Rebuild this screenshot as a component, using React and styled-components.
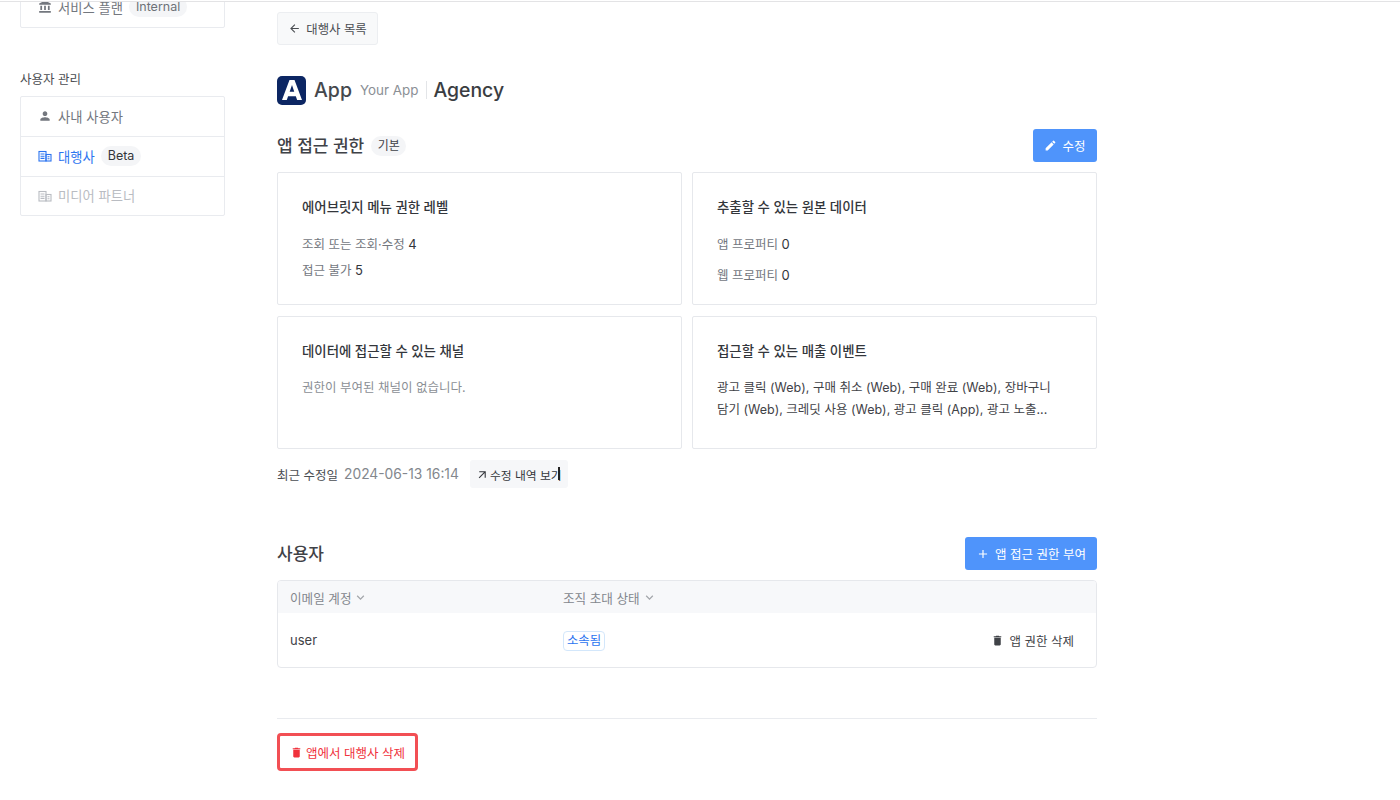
import React from "react";
import styled, { createGlobalStyle } from "styled-components";
import { MdPerson, MdAccountBalance, MdEdit, MdDelete, MdArrowBack, MdAdd, MdArrowOutward, MdKeyboardArrowDown } from "react-icons/md";

const Global = createGlobalStyle`
  html, body { margin: 0; padding: 0; background: #fff; height: 100%; overflow: hidden; }
  body { font-family: Inter, "Noto Sans CJK KR", "Noto Sans", sans-serif; color: #33363b; -webkit-font-smoothing: antialiased; }
  * { box-sizing: border-box; }
`;

const Page = styled.div`
  width: 1400px; height: 800px; overflow: hidden; display: flex; align-items: flex-start;
  margin-top: 1px; border-top: 1px solid #e3e3e5; padding-left: 20px;
`;
const Sidebar = styled.aside`width: 205px; flex: none; display: flex; flex-direction: column;`;
const SideList = styled.div`
  border: 1px solid #e9ebef; border-radius: 2px; display: flex; flex-direction: column;
  margin-top: ${p => p.$top || 0}px;
`;
const SideRow = styled.div`
  height: 40px; display: flex; align-items: center; gap: 6px; padding: 0 0 1px 17px; font-size: 13.3px;
  color: ${p => p.$active ? "#2b74f0" : p.$disabled ? "#b9bcc2" : "#73777e"};
  & + & { border-top: 1px solid #e9ebef; }
  &:first-child, &:last-child { height: 39px; }
  svg { flex: none; }
`;
const SideBadge = styled.span`
  background: #f4f5f7; border-radius: 10px; padding: 0 7px; height: 20px; line-height: 20px; font-size: 12.5px; margin-left: 0;
  color: ${p => p.$muted ? "#6e7278" : "#33363b"};
`;
const SideLabel = styled.div`font-size: 12.5px; color: #4a4d52; margin: 44px 0 8px; line-height: 16px;`;

const Main = styled.main`width: 820px; margin-left: 52px; flex: none; display: flex; flex-direction: column; align-items: stretch; padding-top: 10px;`;
const BackBtn = styled.div`
  align-self: flex-start; width: 101px; height: 33px; display: flex; align-items: center; justify-content: center; gap: 5px;
  background: #f8f9fa; border: 1px solid #eceef1; border-radius: 3px; font-size: 12.4px; color: #4a4d52;
`;
const TitleRow = styled.div`display: flex; align-items: center; height: 30px; margin-top: 30px;`;
const LogoBox = styled.div`
  width: 29px; height: 29px; border-radius: 5px; background: #0c2663; display: flex; align-items: center; justify-content: center; flex: none;
`;
const AppName = styled.span`font-size: 19.5px; font-weight: 500; color: #45484d; margin-left: 8px;`;
const AppSub = styled.span`font-size: 13.4px; color: #8b8f95; margin-left: 8px;`;
const TitleSep = styled.span`width: 1px; height: 18px; background: #e3e5e8; margin: 0 6px 0 8px;`;
const AgencyName = styled.span`font-size: 19.4px; font-weight: 500; color: #3a3d42;`;

const SectionHead = styled.div`display: flex; align-items: center; justify-content: space-between; margin-top: ${p => p.$mt}px; height: 33px;`;
const SectionLeft = styled.div`display: flex; align-items: center; gap: 7px;`;
const SectionTitle = styled.h2`margin: -2px 0 0; font-size: 17px; font-weight: 500; color: #3f4247;`;
const Chip = styled.span`background: #f4f5f7; border-radius: 10px; height: 20px; width: 35px; text-align: center; line-height: 20px; font-size: 12px; color: #3f4247;`;
const PrimaryBtn = styled.div`
  background: #4f94fb; color: #fff; border-radius: 3px; height: 33px; display: flex; align-items: center; justify-content: center;
  gap: ${p => p.$gap}px; width: ${p => p.$w}px; font-size: 12.5px;
`;

const CardGrid = styled.div`display: grid; grid-template-columns: 405px 405px; gap: 11px 10px; margin-top: 10px;`;
const Card = styled.div`height: 133px; border: 1px solid #e6e8ec; border-radius: 2px; padding: 25px 24px 0;`;
const CardTitle = styled.div`font-size: 13.4px; font-weight: 500; color: #33363b; line-height: 18px; margin-bottom: 19px;`;
const Stat = styled.div`font-size: 12.5px; color: #73777e; line-height: 18px; margin-bottom: ${p => p.$mb || 0}px; b { font-weight: 400; color: #33363b; font-size: 13px; }`;
const CardText = styled.div`font-size: 12.5px; line-height: 22px; color: ${p => p.$muted ? "#8b8f95" : "#3f4247"}; margin-top: -2px;`;

const MetaRow = styled.div`display: flex; align-items: center; height: 28px; margin-top: 11px; font-size: 12.5px; color: #4a4d52;`;
const MetaDate = styled.span`color: #83878d; font-size: 13.8px; margin-left: 6px;`;
const HistoryBtn = styled.div`
  position: relative; margin-left: 11px; width: 98px; height: 28px; background: #f6f7f9; border-radius: 3px; display: flex; align-items: center; padding-left: 6px; gap: 1px; font-size: 11.8px; color: #33363b;
`;
const Caret = styled.i`position: absolute; left: 88px; top: 7px; width: 2px; height: 13px; background: #222;`;

const Table = styled.div`margin-top: 10px; border: 1px solid #e6e8ec; border-radius: 4px; overflow: hidden; height: 88px;`;
const THead = styled.div`display: grid; grid-template-columns: 273px 1fr; align-items: center; height: 32px; background: #f7f8fa; padding-left: 12px; font-size: 12.6px; color: #83878d;`;
const THCell = styled.div`display: flex; align-items: center; gap: 2px;`;
const TRow = styled.div`display: grid; grid-template-columns: 273px 1fr auto; align-items: center; height: 54px; padding: 0 22px 0 12px; font-size: 13px; color: #3f4247;`;
const TagCell = styled.div`display: flex; padding-top: 2px;`;
const StatusTag = styled.span`width: 42px; height: 20px; line-height: 18px; text-align: center; border: 1px solid #d3e7fb; border-radius: 4px; color: #2b74f0; font-size: 12.4px;`;
const RowAction = styled.div`display: flex; align-items: center; gap: 5px; font-size: 12.5px; color: #3f4247;`;

const Divider = styled.hr`margin: 50px 0 0; border: none; border-top: 1px solid #e9ebef;`;
const DangerBtn = styled.div`
  margin-top: 14px; align-self: flex-start; width: 141px; height: 38px; border: 3px solid #f24f54; border-radius: 4px; display: flex; align-items: center; justify-content: center; gap: 3px; color: #f0323c; font-size: 12.5px;
`;

const Building = ({ color }) => (
  <svg width="14" height="14" viewBox="0 0 14 14" fill="none" stroke={color} strokeWidth="1.1">
    <rect x="1" y="2.5" width="7" height="9.5" />
    <rect x="8" y="5.5" width="5" height="6.5" />
    <path d="M2.5 5h4M2.5 7.2h4M2.5 9.4h4M9.5 7.7h2M9.5 9.8h2" />
  </svg>
);

const Logo = () => (
  <svg width="20" height="20" viewBox="0 0 23 21" preserveAspectRatio="none">
    <path d="M8.6 0h5.8L23 21h-5.6l-1.5-4H7l-1.5 4H0L8.6 0zm.2 12.4h5.3L11.5 5.2 8.8 12.4z" fill="#fff" fillRule="evenodd" />
  </svg>
);

const Sort = () => <MdKeyboardArrowDown size={15} color="#a3a6ab" />;

export default function App() {
  return (
    <>
      <Global />
      <Page>
        <Sidebar>
          <SideList $top={-15}>
            <SideRow>
              <MdAccountBalance size={14} color="#73777e" />
              서비스 플랜 <SideBadge $muted>Internal</SideBadge>
            </SideRow>
          </SideList>
          <SideLabel>사용자 관리</SideLabel>
          <SideList>
            <SideRow><MdPerson size={14} color="#73777e" />사내 사용자</SideRow>
            <SideRow $active><Building color="#2b74f0" />대행사 <SideBadge>Beta</SideBadge></SideRow>
            <SideRow $disabled><Building color="#b9bcc2" />미디어 파트너</SideRow>
          </SideList>
        </Sidebar>
        <Main>
          <BackBtn><MdArrowBack size={13} />대행사 목록</BackBtn>
          <TitleRow>
            <LogoBox><Logo /></LogoBox>
            <AppName>App</AppName>
            <AppSub>Your App</AppSub>
            <TitleSep />
            <AgencyName>Agency</AgencyName>
          </TitleRow>
          <SectionHead $mt={24}>
            <SectionLeft>
              <SectionTitle>앱 접근 권한</SectionTitle>
              <Chip>기본</Chip>
            </SectionLeft>
            <PrimaryBtn $w={64} $gap={5}><MdEdit size={13} />수정</PrimaryBtn>
          </SectionHead>
          <CardGrid>
            <Card>
              <CardTitle>에어브릿지 메뉴 권한 레벨</CardTitle>
              <Stat $mb={7}>조회 또는 조회·수정 <b>4</b></Stat>
              <Stat>접근 불가 <b>5</b></Stat>
            </Card>
            <Card>
              <CardTitle>추출할 수 있는 원본 데이터</CardTitle>
              <Stat $mb={12}>앱 프로퍼티 <b>0</b></Stat>
              <Stat>웹 프로퍼티 <b>0</b></Stat>
            </Card>
            <Card>
              <CardTitle>데이터에 접근할 수 있는 채널</CardTitle>
              <CardText $muted>권한이 부여된 채널이 없습니다.</CardText>
            </Card>
            <Card>
              <CardTitle>접근할 수 있는 매출 이벤트</CardTitle>
              <CardText>광고 클릭 (Web), 구매 취소 (Web), 구매 완료 (Web), 장바구니<br />담기 (Web), 크레딧 사용 (Web), 광고 클릭 (App), 광고 노출...</CardText>
            </Card>
          </CardGrid>
          <MetaRow>
            최근 수정일
            <MetaDate>2024-06-13 16:14</MetaDate>
            <HistoryBtn><MdArrowOutward size={13} />수정 내역 보기<Caret /></HistoryBtn>
          </MetaRow>
          <SectionHead $mt={49}>
            <SectionTitle>사용자</SectionTitle>
            <PrimaryBtn $w={132} $gap={5}><MdAdd size={14} />앱 접근 권한 부여</PrimaryBtn>
          </SectionHead>
          <Table>
            <THead>
              <THCell>이메일 계정 <Sort /></THCell>
              <THCell>조직 초대 상태 <Sort /></THCell>
            </THead>
            <TRow>
              <span>user</span>
              <TagCell><StatusTag>소속됨</StatusTag></TagCell>
              <RowAction><MdDelete size={13} />앱 권한 삭제</RowAction>
            </TRow>
          </Table>
          <Divider />
          <DangerBtn><MdDelete size={13} />앱에서 대행사 삭제</DangerBtn>
        </Main>
      </Page>
    </>
  );
}
